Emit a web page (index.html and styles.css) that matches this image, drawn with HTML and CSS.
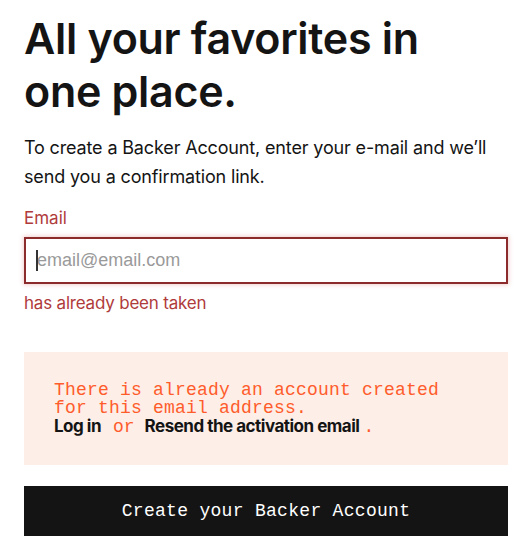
FILE: index.html
```html
<!DOCTYPE html>
<html>
<head>
<meta charset="utf-8">
<link rel="stylesheet" href="styles.css">
</head>
<body>
<main class="page">
  <h1 class="title">All your favorites in one place.</h1>
  <p class="intro">To create a Backer Account, enter your e-mail and we’ll send you a confirmation link.</p>
  <form class="form">
    <label class="label" for="email">Email</label>
    <div class="field"><span class="caret"></span><input id="email" class="input" type="email" placeholder="email@email.com"></div>
    <p class="error">has already been taken</p>
    <div class="alert">
      <p class="alert-text">There is already an account created for this email address.</p>
      <p class="alert-links"><a class="alink">Log in</a><span class="or">or</span><a class="alink">Resend the activation email</a><span class="dot">.</span></p>
    </div>
    <button class="submit" type="button">Create your Backer Account</button>
  </form>
</main>
</body>
</html>
```
FILE: styles.css
```css
html, body { margin: 0; padding: 0; background: #fff; }
.page {
  padding: 0 22px 0 24px;
  font-family: "Inter", "Liberation Sans", sans-serif;
  color: #141414;
}
.title {
  margin: 0;
  padding-top: 12px;
  font-size: 43px;
  line-height: 53px;
  font-weight: 600;
  letter-spacing: -0.3px;
  width: 420px;
}
.intro {
  margin: 15px 0 0;
  font-size: 18px;
  line-height: 29px;
  letter-spacing: -0.15px;
}
.form { display: flex; flex-direction: column; }
.label {
  margin-top: 15px;
  font-size: 17px;
  line-height: 24px;
  color: #b03b3b;
}
.field {
  position: relative;
  margin-top: 7px;
  height: 47px;
  box-sizing: border-box;
  border: 2px solid #8c2b2b;
  box-shadow: 0 0 4px 1px rgba(220, 120, 120, 0.35);
  background: #fff;
  display: flex;
  align-items: center;
}
.caret {
  position: absolute;
  left: 10px;
  top: 11px;
  width: 2px;
  height: 21px;
  background: #333;
}
.input {
  border: 0;
  outline: none;
  width: 100%;
  padding: 0 0 0 11px;
  font-family: "Liberation Sans", Arial, sans-serif;
  font-size: 18px;
  background: transparent;
}
.input::placeholder { color: #9a9a9a; }
.error {
  margin: 7px 0 0;
  font-size: 17px;
  line-height: 24px;
  color: #b03b3b;
  letter-spacing: -0.2px;
}
.alert {
  margin-top: 37px;
  background: #fdeee7;
  height: 113px;
  box-sizing: border-box;
  padding: 29px 30px 0;
}
.alert-text {
  margin: 0;
  font-family: "Liberation Mono", "DejaVu Sans Mono", monospace;
  font-size: 18px;
  line-height: 18px;
  letter-spacing: 0.2px;
  color: #ff5c2c;
  width: 420px;
}
.alert-links {
  margin: 0;
  font-size: 17px;
  line-height: 18px;
  color: #141414;
  display: flex;
  align-items: baseline;
}
.alink { font-weight: 700; letter-spacing: -0.5px; }
.or, .dot {
  font-family: "Liberation Mono", monospace;
  font-size: 18px;
  color: #ff5c2c;
}
.or { margin: 0 10px 0 12px; }
.dot { margin-left: 4px; }
.submit {
  margin-top: 21px;
  height: 50px;
  border: 0;
  background: #141414;
  color: #fff;
  font-family: "Liberation Mono", "DejaVu Sans Mono", monospace;
  font-size: 18px;
  letter-spacing: 0.3px;
}
```
